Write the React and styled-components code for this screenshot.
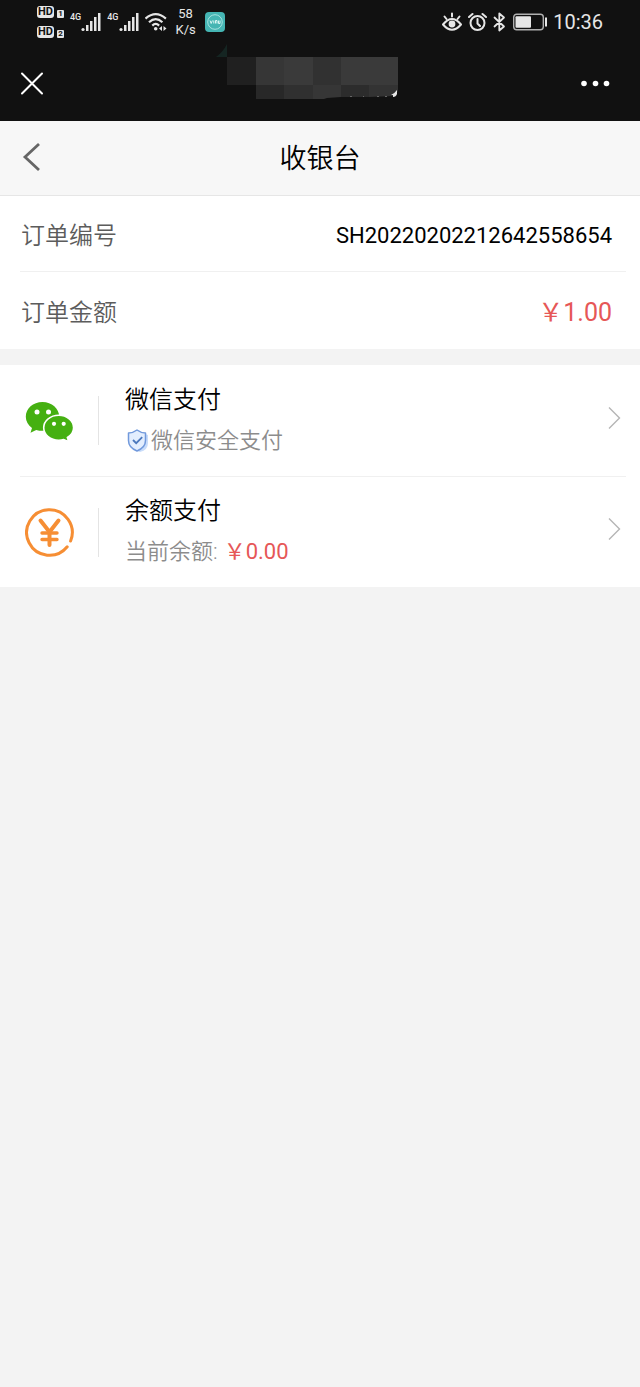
import React from 'react';
import styled, { createGlobalStyle } from 'styled-components';

const GlobalStyle = createGlobalStyle`
  * {
    box-sizing: border-box;
  }
  body {
    margin: 0;
    background: #f3f3f3;
    color: #000;
    font-family: Roboto, "Noto Sans CJK SC", sans-serif;
  }
  button {
    margin: 0;
    padding: 0;
    border: 0;
    background: none;
    color: inherit;
    font: inherit;
    cursor: pointer;
  }
  h1, dl, dd, ul {
    margin: 0;
    padding: 0;
    font-weight: 400;
  }
  svg {
    display: block;
    flex: none;
  }
`;

const StatusBar = styled.div`
  display: flex;
  justify-content: space-between;
  align-items: center;
  height: 44px;
  padding: 0 37px;
  background: #111;
  color: #e6e6e6;
`;

const StatusGroup = styled.div`
  display: flex;
  align-items: center;
  gap: 6px;
`;

const HdList = styled.div`
  display: flex;
  flex-direction: column;
  gap: 8px;
`;

const HdLine = styled.div`
  display: flex;
  align-items: flex-end;
  gap: 3px;
`;

const Badge = styled.span`
  width: ${props => (props.$small ? 7 : 17)}px;
  height: ${props => (props.$small ? 8 : 12)}px;
  border-radius: ${props => (props.$small ? 1 : 3)}px;
  background: #e6e6e6;
  color: #111;
  font-size: ${props => (props.$small ? 8 : 11)}px;
  line-height: ${props => (props.$small ? 8 : 12)}px;
  font-weight: 700;
  text-align: center;
`;

const Signal = styled.div`
  display: flex;
  align-items: flex-start;
  font-size: 9px;
  line-height: 10px;
  font-weight: 500;
`;

const Speed = styled.div`
  padding: 0 3px;
  font-size: 13px;
  line-height: 16px;
  text-align: center;
`;

const Clock = styled.time`
  font-size: 20px;
  line-height: 24px;
`;

const AppBar = styled.div`
  display: grid;
  grid-template-columns: 1fr auto 1fr;
  height: 77px;
  padding: 0 20px;
  background: #111;
  color: #fff;
`;

const BarButton = styled.button`
  align-self: center;
  justify-self: ${props => (props.$end ? 'end' : 'start')};
  padding-right: ${props => (props.$end ? 10 : 0)}px;
`;

const Header = styled.header`
  display: grid;
  grid-template-columns: 1fr auto 1fr;
  align-items: center;
  height: 75px;
  padding: 0 20px 2px;
  border-bottom: 1px solid #e6e6e6;
  background: #f7f7f7;
`;

const Title = styled.h1`
  padding-top: 3px;
  font-size: 27px;
  line-height: 36px;
  font-weight: 350;
`;

const Panel = styled.section`
  margin-bottom: 16px;
  padding-left: 20px;
  background: #fff;
`;

const OrderRow = styled.div`
  display: flex;
  justify-content: space-between;
  align-items: center;
  height: ${props => (props.$last ? 77 : 76)}px;
  margin-right: 14px;
  padding: 4px 14px 0 1px;
  border-bottom: ${props => (props.$last ? 0 : 1)}px solid #f0f0f0;
`;

const Label = styled.dt`
  color: #5c5c5c;
  font-size: 24px;
  line-height: 32px;
  font-weight: 350;
`;

const OrderNumber = styled.dd`
  font-size: 22px;
  line-height: 32px;
`;

const Total = styled.dd`
  color: #e65757;
  font-size: 25px;
  line-height: 32px;
`;

const PayList = styled.ul`
  list-style: none;
`;

const PayItem = styled.li`
  height: ${props => (props.$last ? 110 : 112)}px;
  margin-right: 14px;
  border-bottom: ${props => (props.$last ? 0 : 1)}px solid #f0f0f0;
`;

const PayButton = styled.button`
  display: flex;
  align-items: center;
  width: 100%;
  height: 100%;
  padding: 0 5px;
  text-align: left;
`;

const PayIcon = styled.span`
  padding-right: 24px;
  border-right: 1px solid #e4e4e4;
`;

const PayText = styled.span`
  display: flex;
  flex: 1;
  flex-direction: column;
  gap: 8px;
  padding: 0 0 2px 26px;
`;

const PayName = styled.span`
  font-size: 24px;
  line-height: 34px;
  font-weight: 350;
`;

const PayNote = styled.span`
  display: flex;
  align-items: center;
  color: #8c8c8c;
  font-size: 22px;
  line-height: 32px;
  font-weight: 350;
`;

const Balance = styled.span`
  padding-left: 6px;
  color: #e65757;
  font-weight: 400;
`;

const Arrow = styled.svg`
  margin-bottom: 6px;
`;

const SignalBars = () => (
  <svg width="20" height="20" viewBox="0 0 20 20" fill="currentColor" aria-hidden="true">
    <circle cx="2" cy="17.5" r="1.6" />
    <rect x="5" y="13" width="2.5" height="6" />
    <rect x="9" y="9" width="2.5" height="10" />
    <rect x="13" y="5" width="2.5" height="14" />
    <rect x="17" y="1" width="2.5" height="18" />
  </svg>
);

const Wifi = () => (
  <svg width="22" height="20" viewBox="0 0 22 20" aria-hidden="true">
    <g fill="none" stroke="currentColor" strokeWidth="2.2">
      <path d="M.5 6.6Q10.7-2.2 20.9 6.6" />
      <path d="M4 10.2Q10.7 4 17.4 10.2" />
      <path d="M7.3 13.6Q10.7 10.2 14.1 13.6" />
    </g>
    <circle cx="10.7" cy="16.8" r="1.8" fill="currentColor" />
    <path d="M17 14v5l-3-2.5zM18.5 14v5l3-2.5z" fill="currentColor" />
  </svg>
);

const AppBadge = () => (
  <svg width="20" height="20" viewBox="0 0 20 20" aria-hidden="true">
    <rect width="20" height="20" rx="4" fill="#45b5b3" />
    <circle cx="10" cy="10" r="7.3" fill="none" stroke="#a5e2e0" />
    <path d="M5 8.500l1.200 3 1.200-3M8.800 8.500v3M10.500 11.500v-3h1.500v3M13.500 8.500v3h1.500v-3" fill="none" stroke="#d9f5f3" />
  </svg>
);

const Eye = () => (
  <svg width="20" height="20" viewBox="0 0 20 20" aria-hidden="true">
    <g fill="none" stroke="currentColor" strokeWidth="2" strokeLinecap="round">
      <path d="M1 12.5Q10 1.5 19 12.5Q10 23 1 12.5z" strokeLinejoin="round" />
      <path d="M10 1.500v3M2.500 4.500l2 2.500M17.500 4.500l-2 2.500" />
    </g>
    <circle cx="10" cy="12" r="3.4" fill="currentColor" />
  </svg>
);

const Alarm = () => (
  <svg width="19" height="20" viewBox="0 0 19 20" fill="none" stroke="currentColor" strokeWidth="2" strokeLinecap="round" aria-hidden="true">
    <circle cx="9.5" cy="11" r="7" />
    <path d="M9.500 7v4.500l2.500 2.500M1 5l3.500-3M18 5l-3.500-3" />
  </svg>
);

const Bluetooth = () => (
  <svg width="13" height="20" viewBox="0 0 13 20" fill="none" stroke="currentColor" strokeWidth="1.8" strokeLinejoin="round" strokeLinecap="round" aria-hidden="true">
    <path d="M1.500 5.500l9.500 9-4.700 4V1.500l4.700 4-9.500 9" />
  </svg>
);

const Battery = () => (
  <svg width="35" height="18" viewBox="0 0 35 18" aria-hidden="true">
    <rect x="1.7" y="1.2" width="29.6" height="15.6" rx="3" fill="none" stroke="#b0b0b0" strokeWidth="1.4" />
    <rect x="3.5" y="3.2" width="15.5" height="11.6" rx="1" fill="currentColor" />
    <path d="M34 4.500v9" stroke="currentColor" strokeWidth="2" />
  </svg>
);

// the shop name is hidden behind mosaic blocks
const HiddenName = () => (
  <svg width="208" height="56" viewBox="0 0 208 56" aria-hidden="true">
    <path d="M11 0v13H0Q7 8 11 0z" fill="#152522" />
    <path d="M11 13h29v28H11z" fill="#202020" />
    <path d="M40 13h28v28H40z" fill="#363636" />
    <path d="M68 13h29v28H68z" fill="#3a3a3a" />
    <path d="M97 13h28v28H97z" fill="#313131" />
    <path d="M125 13h57v28h-57z" fill="#3a3a3a" />
    <path d="M40 41h28v14H40z" fill="#282828" />
    <path d="M68 41h29v14H68z" fill="#303030" />
    <path d="M97 41h28v12l-14 1-3 1H97z" fill="#363636" />
    <path d="M125 41h28v12h-28z" fill="#2c2c2c" />
    <path d="M153 41h29v6l-4 5-25 1z" fill="#333" />
    <path d="M181 46v4q-1 3-4 3v-2h-2q4-2 6-5z" fill="#e8e8e8" />
    <path d="M134 52.500h2M147 52.500h1M161 52.500h2M169 52.500h2" stroke="#666" />
  </svg>
);

const CloseIcon = () => (
  <svg width="24" height="24" viewBox="0 0 24 24" fill="none" stroke="currentColor" strokeWidth="2" strokeLinecap="round" aria-hidden="true">
    <path d="M2 2.500l20 20M22 2.500l-20 20" />
  </svg>
);

const MoreIcon = () => (
  <svg width="30" height="8" viewBox="0 0 30 8" fill="currentColor" aria-hidden="true">
    <circle cx="4" cy="4.5" r="2.8" />
    <circle cx="15.5" cy="4.5" r="2.8" />
    <circle cx="26.5" cy="4.5" r="2.8" />
  </svg>
);

const BackIcon = () => (
  <svg width="22" height="30" viewBox="0 0 22 30" fill="none" stroke="#666" strokeWidth="2.8" aria-hidden="true">
    <path d="M19 2L5 15l14 13" />
  </svg>
);

const ArrowIcon = () => (
  <Arrow width="14" height="24" viewBox="0 0 14 24" fill="none" stroke="#b5b5b5" strokeWidth="1.4" aria-hidden="true">
    <path d="M2 1.500L12.500 12 2 22.500" />
  </Arrow>
);

const WechatIcon = () => (
  <svg width="49" height="49" viewBox="0 0 49 49" aria-hidden="true">
    <g transform="translate(0 3)">
      <path d="M17.500 3C8 3 .8 9.500.8 17.700c0 4.600 2.400 8.400 6.200 11.300L5.500 33.800l5.700-2.900c2 .6 4.100.9 6.300.9 9.300 0 16.700-6.400 16.700-14.300S26.800 3 17.500 3z" fill="#45b011" />
      <path d="M33.700 16.300c-8.200 0-15 5.500-15 12.500s6.800 12.400 15 12.400c1.800 0 3.500-.2 5-.7l5 2.300-1.300-4.300c3.700-2.200 6.200-5.600 6.200-9.700 0-7-6.700-12.500-14.900-12.500z" fill="#45b011" stroke="#fff" strokeWidth="1.6" />
      <g fill="#fff">
        <circle cx="12" cy="13" r="2.5" />
        <circle cx="23.5" cy="13" r="2.5" />
        <circle cx="29" cy="24.8" r="2.1" />
        <circle cx="38.7" cy="24.8" r="2.1" />
      </g>
    </g>
  </svg>
);

const CoinIcon = () => (
  <svg width="49" height="49" viewBox="0 0 49 49" fill="none" stroke="#f68e34" strokeLinecap="round" aria-hidden="true">
    <path d="M45.6 33A22.800 22.800 0 1 0 42.200 38.800" strokeWidth="3" />
    <path d="M15.500 12.500l9 11.500 9-11.500M24.500 24v13" strokeWidth="4" />
    <path d="M17 25h15M17 31.500h15" strokeWidth="3.4" />
  </svg>
);

const ShieldIcon = () => (
  <svg width="26" height="26" viewBox="0 0 26 26" aria-hidden="true">
    <path d="M15 4l8 3v8q0 7-8 9-5-1-7-5z" fill="#c8dcfa" />
    <path d="M12 2q4 3 8.500 3v7.500q0 7-8.500 10.500-8.500-3.500-8.500-10.500V5q4.500 0 8.500-3z" fill="#e3eefe" stroke="#7199dc" strokeWidth="1.5" strokeLinejoin="round" />
    <path d="M8 12l3.200 3.200 6-6" fill="none" stroke="#4b78bd" strokeWidth="1.8" />
  </svg>
);

const App = () => (
  <>
    <GlobalStyle />
    <StatusBar>
      <StatusGroup>
        <HdList>
          <HdLine><Badge>HD</Badge><Badge $small>1</Badge></HdLine>
          <HdLine><Badge>HD</Badge><Badge $small>2</Badge></HdLine>
        </HdList>
        <Signal>4G<SignalBars /></Signal>
        <Signal>4G<SignalBars /></Signal>
        <Wifi />
        <Speed>58<br />K/s</Speed>
        <AppBadge />
      </StatusGroup>
      <StatusGroup>
        <Eye />
        <Alarm />
        <Bluetooth />
        <Battery />
        <Clock>10:36</Clock>
      </StatusGroup>
    </StatusBar>
    <AppBar>
      <BarButton aria-label="关闭"><CloseIcon /></BarButton>
      <HiddenName />
      <BarButton $end aria-label="更多"><MoreIcon /></BarButton>
    </AppBar>
    <Header>
      <BarButton aria-label="返回"><BackIcon /></BarButton>
      <Title>收银台</Title>
    </Header>
    <main>
      <Panel as="dl">
        <OrderRow>
          <Label>订单编号</Label>
          <OrderNumber>SH20220202212642558654</OrderNumber>
        </OrderRow>
        <OrderRow $last>
          <Label>订单金额</Label>
          <Total>￥1.00</Total>
        </OrderRow>
      </Panel>
      <Panel>
        <PayList>
          <PayItem>
            <PayButton>
              <PayIcon><WechatIcon /></PayIcon>
              <PayText>
                <PayName>微信支付</PayName>
                <PayNote><ShieldIcon />微信安全支付</PayNote>
              </PayText>
              <ArrowIcon />
            </PayButton>
          </PayItem>
          <PayItem $last>
            <PayButton>
              <PayIcon><CoinIcon /></PayIcon>
              <PayText>
                <PayName>余额支付</PayName>
                <PayNote>当前余额:<Balance>￥0.00</Balance></PayNote>
              </PayText>
              <ArrowIcon />
            </PayButton>
          </PayItem>
        </PayList>
      </Panel>
    </main>
  </>
);

export default App;
